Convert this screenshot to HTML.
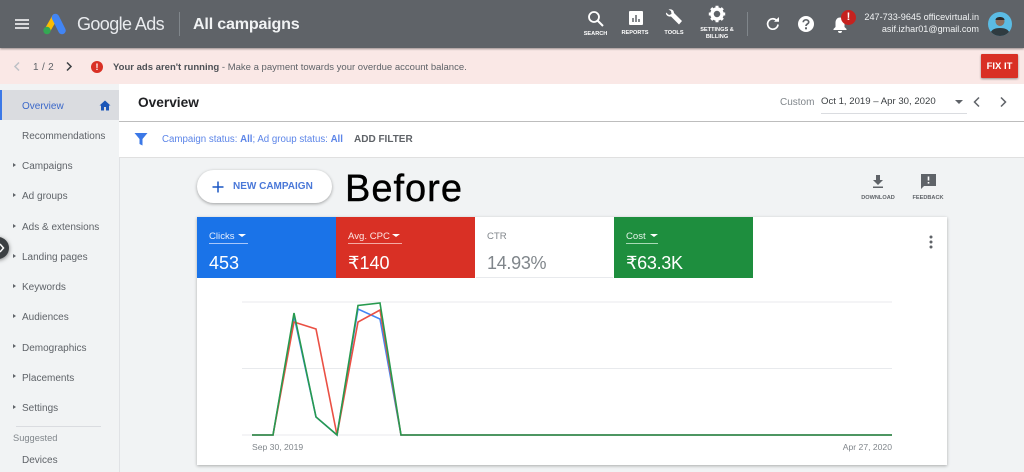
<!DOCTYPE html>
<html><head><meta charset="utf-8"><style>
html,body{margin:0;padding:0}
body{width:1024px;height:472px;position:relative;overflow:hidden;background:#f1f3f4;font-family:"Liberation Sans",sans-serif;color:#5f6368}
.a{position:absolute;white-space:nowrap}
.nav{position:absolute;left:22px;font-size:10px;color:#5f6368;line-height:14px;white-space:nowrap}
.tri{position:absolute;left:13px;width:0;height:0;border-left:3px solid #5f6368;border-top:2.5px solid transparent;border-bottom:2.5px solid transparent}
.ic{position:absolute;font-size:5.6px;font-weight:bold;color:#fff;text-align:center;line-height:7px;white-space:nowrap}
.tl{position:absolute;font-size:9.6px;line-height:14px;white-space:nowrap}
.tv{position:absolute;font-size:18px;line-height:22px;white-space:nowrap}
</style></head><body>
<!-- header -->
<div class="a" style="left:0;top:0;width:1024px;height:48px;background:#5f6368;box-shadow:0 1px 2px rgba(0,0,0,.4)"></div>
<svg class="a" style="left:14px;top:18px" width="16" height="12"><path d="M1 2h14M1 6h14M1 10h14" stroke="#fff" stroke-width="1.5"/></svg>
<svg class="a" style="left:42px;top:12px" width="26" height="24" viewBox="0 0 26 24"><path d="M5 19L13 5" stroke="#fbbc04" stroke-width="6" stroke-linecap="round"/><path d="M13.500 5.500L20 18.500" stroke="#4285f4" stroke-width="7.500" stroke-linecap="round"/><circle cx="5" cy="18.500" r="3.700" fill="#34a853"/></svg>
<div class="a" style="left:77px;top:13px;font-size:18px;line-height:22px;color:#e8eaed;letter-spacing:-.6px">Google Ads</div>
<div class="a" style="left:179px;top:12px;width:1px;height:24px;background:#80868b"></div>
<div class="a" style="left:193px;top:13px;font-size:16.100px;line-height:22px;font-weight:bold;color:#f1f3f4;letter-spacing:-.2px">All campaigns</div>
<svg class="a" style="left:587px;top:10px" width="18" height="18" viewBox="0 0 18 18"><circle cx="7" cy="7" r="5" fill="none" stroke="#fff" stroke-width="1.800"/><path d="M10.500 10.500L16 16" stroke="#fff" stroke-width="2"/></svg>
<div class="ic" style="left:583px;top:30.500px;width:25px">SEARCH</div>
<svg class="a" style="left:628px;top:10px" width="16" height="16" viewBox="0 0 16 16"><rect x="1" y="1" width="14" height="14" rx="1" fill="#fff"/><path d="M5 8v4M8 5v7M11 9v3" stroke="#5f6368" stroke-width="1.500"/></svg>
<div class="ic" style="left:620px;top:30px;width:30px">REPORTS</div>
<svg class="a" style="left:664px;top:8px" width="20" height="19" viewBox="0 0 20 19"><path d="M2 4.500L5 7l2.500-1-.5-3L4.500 1.500C7 .5 10 2 10 5l8 8-3 3.500-8-8C4 9 1.500 7 2 4.500z" fill="#fff"/></svg>
<div class="ic" style="left:661px;top:30px;width:26px">TOOLS</div>
<svg class="a" style="left:708px;top:5px" width="18" height="18" viewBox="0 0 18 18"><circle cx="9" cy="9" r="5" fill="none" stroke="#fff" stroke-width="3.500"/><path d="M9 .8v3M9 14.200v3M.8 9h3M14.200 9h3M3.200 3.200l2.100 2.100M12.700 12.700l2.100 2.100M3.200 14.800l2.100-2.100M12.700 5.300l2.100-2.100" stroke="#fff" stroke-width="3"/></svg>
<div class="ic" style="left:697px;top:26.500px;width:40px">SETTINGS &amp;<br>BILLING</div>
<div class="a" style="left:747px;top:12px;width:1px;height:24px;background:#80868b"></div>
<svg class="a" style="left:765px;top:16px" width="16" height="16" viewBox="0 0 16 16"><path d="M13 8.500A5.200 5.200 0 1 1 11.500 4.300" fill="none" stroke="#fff" stroke-width="1.700"/><path d="M9 5.800h5V1z" fill="#fff"/></svg>
<svg class="a" style="left:797px;top:15px" width="18" height="18" viewBox="0 0 18 18"><circle cx="9" cy="9" r="8" fill="#fff"/><path d="M6.300 7.200C6.300 4 11.700 4 11.700 7.200 11.700 9 9 9 9 11" fill="none" stroke="#5f6368" stroke-width="1.700"/><rect x="8" y="12.300" width="2" height="2" fill="#5f6368"/></svg>
<svg class="a" style="left:832px;top:16px" width="16" height="17" viewBox="0 0 16 17"><path d="M8 1.500c-3 0-4.500 2.500-4.500 5V11L1.500 13v1h13v-1l-2-2V6.500c0-2.500-1.500-5-4.500-5z" fill="#fff"/><path d="M6 15h4a2 2 0 0 1-4 0z" fill="#fff"/></svg>
<div class="a" style="left:841px;top:10px;width:15px;height:15px;border-radius:50%;background:#c5221f;color:#fff;font-size:11px;font-weight:bold;line-height:15px;text-align:center">!</div>
<div class="a" style="left:844px;top:11px;width:135px;text-align:right;font-size:9.100px;line-height:12px;color:#f1f3f4">247-733-9645 officevirtual.in</div>
<div class="a" style="left:844px;top:22.500px;width:135px;text-align:right;font-size:9.100px;line-height:12px;color:#f1f3f4">asif.izhar01@gmail.com</div>
<svg class="a" style="left:988px;top:12px" width="24" height="24" viewBox="0 0 24 24"><defs><clipPath id="c"><circle cx="12" cy="12" r="12"/></clipPath></defs><g clip-path="url(#c)"><rect width="24" height="24" fill="#5bbce4"/><path d="M2 24c0-6 4-8 10-8s10 2 10 8z" fill="#2f3b40"/><circle cx="12" cy="9.500" r="4.500" fill="#8a6f60"/><path d="M7.500 8c0-4 9-4 9 0z" fill="#2a2a2a"/></g></svg>
<!-- banner -->
<div class="a" style="left:0;top:48px;width:1024px;height:36px;background:#fae8e6;z-index:-1"></div>
<svg class="a" style="left:12px;top:61px" width="10" height="11"><path d="M7 1.500L3 5.500l4 4" fill="none" stroke="#bdc1c6" stroke-width="1.500"/></svg>
<div class="a" style="left:33px;top:60px;font-size:10px;line-height:15px;color:#5f6368;letter-spacing:.3px">1 / 2</div>
<svg class="a" style="left:64px;top:61px" width="10" height="11"><path d="M3 1.500l4 4-4 4" fill="none" stroke="#3c4043" stroke-width="1.500"/></svg>
<div class="a" style="left:91px;top:61px;width:12px;height:12px;border-radius:50%;background:#d93025;color:#fff;font-size:9px;font-weight:bold;line-height:12px;text-align:center">!</div>
<div class="a" style="left:113px;top:59.500px;font-size:9.530px;line-height:15px;color:#5f6368"><b style="color:#4d5156">Your ads aren't running</b> - Make a payment towards your overdue account balance.</div>
<div class="a" style="left:981px;top:54px;width:37px;height:24px;background:#d93025;color:#fff;font-size:9.500px;font-weight:bold;line-height:25px;text-align:center;border-radius:1px;box-shadow:0 1px 2px rgba(0,0,0,.4)">FIX IT</div>
<!-- sidebar -->
<div class="a" style="left:118.500px;top:84px;width:1px;height:388px;background:#e0e2e5"></div>
<div class="a" style="left:0;top:90px;width:119px;height:30px;background:#dadce0"></div>
<div class="a" style="left:0;top:90px;width:2px;height:30px;background:#3b78e7"></div>
<div class="nav" style="top:100px;color:#3b68c9">Overview</div>
<svg class="a" style="left:99px;top:100px" width="12" height="11" viewBox="0 0 12 11"><path d="M6 .5L.5 5.500H2V10.500h3V7h2v3.500h3V5.500h1.500z" fill="#1a56b8"/></svg>
<div class="nav" style="top:130px">Recommendations</div>
<div class="tri" style="top:163px"></div><div class="nav" style="top:160px">Campaigns</div>
<div class="tri" style="top:193px"></div><div class="nav" style="top:190px">Ad groups</div>
<div class="tri" style="top:224px"></div><div class="nav" style="top:221px">Ads &amp; extensions</div>
<div class="tri" style="top:254px"></div><div class="nav" style="top:251px">Landing pages</div>
<div class="tri" style="top:284px"></div><div class="nav" style="top:281px">Keywords</div>
<div class="tri" style="top:314px"></div><div class="nav" style="top:311px">Audiences</div>
<div class="tri" style="top:344px"></div><div class="nav" style="top:342px">Demographics</div>
<div class="tri" style="top:374px"></div><div class="nav" style="top:372px">Placements</div>
<div class="tri" style="top:405px"></div><div class="nav" style="top:402px">Settings</div>
<div class="a" style="left:16px;top:426px;width:85px;height:1px;background:#dadce0"></div>
<div class="nav" style="left:13px;top:431px;font-size:9.300px;color:#80868b">Suggested</div>
<div class="nav" style="top:454px">Devices</div>
<div class="a" style="left:-13px;top:237px;width:22px;height:22px;border-radius:50%;background:#3c4043;box-shadow:0 1px 4px rgba(0,0,0,.5)"></div>
<svg class="a" style="left:0;top:243px" width="8" height="10"><path d="M0 1l3.500 4L0 9" fill="none" stroke="#fff" stroke-width="1.500"/></svg>
<!-- main header -->
<div class="a" style="left:119px;top:84px;width:905px;height:37px;background:#fff;border-bottom:1px solid #bdbdbd"></div>
<div class="a" style="left:138px;top:93px;font-size:13.700px;line-height:20px;font-weight:bold;color:#202124">Overview</div>
<div class="a" style="left:780px;top:96px;font-size:10px;line-height:14px;color:#80868b">Custom</div>
<div class="a" style="left:821px;top:95px;font-size:9.600px;line-height:14px;color:#3c4043">Oct 1, 2019 – Apr 30, 2020</div>
<div class="a" style="left:821px;top:113px;width:146px;height:1px;background:#dadce0"></div>
<div class="a" style="left:955px;top:100px;width:0;height:0;border-top:4px solid #5f6368;border-left:4px solid transparent;border-right:4px solid transparent"></div>
<svg class="a" style="left:972px;top:96px" width="10" height="12"><path d="M7 1.500L2.500 6 7 10.500" fill="none" stroke="#5f6368" stroke-width="1.500"/></svg>
<svg class="a" style="left:998px;top:96px" width="10" height="12"><path d="M3 1.500L7.500 6 3 10.500" fill="none" stroke="#5f6368" stroke-width="1.500"/></svg>
<!-- filter -->
<div class="a" style="left:119px;top:122px;width:905px;height:35px;background:#fff;border-bottom:1px solid #e0e0e0"></div>
<svg class="a" style="left:134px;top:132px" width="14" height="14" viewBox="0 0 14 14"><path d="M.5 1h13L8.500 7v6.500l-3-1.500V7z" fill="#3b78e7"/></svg>
<div class="a" style="left:162px;top:133px;font-size:9.700px;line-height:14px;color:#5c85e8">Campaign status: <b>All</b>; Ad group status: <b>All</b></div>
<div class="a" style="left:354px;top:133px;font-size:10px;line-height:14px;font-weight:bold;color:#5f6368">ADD FILTER</div>
<!-- new campaign -->
<div class="a" style="left:197px;top:170px;width:135px;height:33px;border-radius:17px;background:#fff;box-shadow:0 1px 3px rgba(0,0,0,.35)"></div>
<svg class="a" style="left:212px;top:181px" width="12" height="12"><path d="M6 .5v11M.5 6h11" stroke="#1a56c4" stroke-width="1.500"/></svg>
<div class="a" style="left:233px;top:180px;font-size:10px;line-height:14px;font-weight:bold;color:#4a78d8">NEW CAMPAIGN</div>
<div class="a" style="left:345px;top:167.500px;font-size:38px;line-height:42px;color:#000;letter-spacing:1px;-webkit-text-stroke:.4px #000">Before</div>
<!-- download, feedback -->
<svg class="a" style="left:871px;top:174px" width="14" height="15" viewBox="0 0 14 15"><path d="M5 1h4v5h3L7 11 2 6h3z" fill="#5f6368"/><rect x="2" y="12.500" width="10" height="1.500" fill="#5f6368"/></svg>
<div class="ic" style="left:858px;top:195px;width:40px;color:#5f6368">DOWNLOAD</div>
<svg class="a" style="left:920px;top:173px" width="17" height="17" viewBox="0 0 17 17"><path d="M1 1h15v12H4l-3 3z" fill="#5f6368"/><rect x="7.700" y="3.500" width="1.600" height="4" fill="#fff"/><rect x="7.700" y="9" width="1.600" height="1.600" fill="#fff"/></svg>
<div class="ic" style="left:908px;top:195px;width:40px;color:#5f6368">FEEDBACK</div>
<!-- card -->
<div class="a" style="left:197px;top:217px;width:750px;height:248px;background:#fff;box-shadow:0 1px 3px rgba(0,0,0,.3)"></div>
<div class="a" style="left:197px;top:217px;width:139px;height:61px;background:#1a73e8"></div>
<div class="a" style="left:336px;top:217px;width:139px;height:61px;background:#d93025"></div>
<div class="a" style="left:476px;top:277px;width:137px;height:1px;background:#e8eaed"></div>
<div class="a" style="left:614px;top:217px;width:139px;height:61px;background:#1e8e3e"></div>
<div class="tl" style="left:209px;top:229.500px;color:#e8f0fe">Clicks</div>
<div class="a" style="left:238px;top:234px;border-top:3.500px solid #fff;border-left:4px solid transparent;border-right:4px solid transparent"></div>
<div class="a" style="left:209px;top:243px;width:39px;height:1px;background:#a8c7fa"></div>
<div class="tv" style="left:209px;top:252px;color:#fff">453</div>
<div class="tl" style="left:348px;top:229.500px;color:#fce8e6">Avg. CPC</div>
<div class="a" style="left:392px;top:234px;border-top:3.500px solid #fff;border-left:4px solid transparent;border-right:4px solid transparent"></div>
<div class="a" style="left:348px;top:243px;width:54px;height:1px;background:#f4aaa4"></div>
<div class="tv" style="left:348px;top:252px;color:#fff;font-family:'Liberation Sans','DejaVu Sans',sans-serif">₹140</div>
<div class="tl" style="left:487px;top:229.500px;color:#80868b">CTR</div>
<div class="tv" style="left:487px;top:252px;color:#80868b;letter-spacing:-.3px">14.93%</div>
<div class="tl" style="left:626px;top:229.500px;color:#e6f4ea">Cost</div>
<div class="a" style="left:650px;top:234px;border-top:3.500px solid #fff;border-left:4px solid transparent;border-right:4px solid transparent"></div>
<div class="a" style="left:626px;top:243px;width:32px;height:1px;background:#a8dab5"></div>
<div class="tv" style="left:626px;top:252px;color:#fff;font-family:'Liberation Sans','DejaVu Sans',sans-serif;letter-spacing:-.3px">₹63.3K</div>
<svg class="a" style="left:928px;top:235px" width="6" height="14"><circle cx="3" cy="2" r="1.500" fill="#5f6368"/><circle cx="3" cy="7" r="1.500" fill="#5f6368"/><circle cx="3" cy="12" r="1.500" fill="#5f6368"/></svg>
<!-- chart -->
<svg class="a" style="left:0;top:0" width="1024" height="472">
<path d="M242 302H892M242 368.500H892M242 435H892" stroke="#e8eaed" stroke-width="1"/>
<polyline points="252,435 273,435 294,316 316,417 337,435 358,309 380,319 401,435 892,435" fill="none" stroke="#4285f4" stroke-width="1.600"/>
<polyline points="252,435 273,435 294,322 316,329 337,435 358,322 380,310 401,435 892,435" fill="none" stroke="#ea5044" stroke-width="1.600"/>
<polyline points="252,435 273,435 294,313 316,417 337,435 358,305.500 380,303 401,435 892,435" fill="none" stroke="#279a4e" stroke-width="1.600"/>
</svg>
<div class="a" style="left:252px;top:441px;font-size:8.600px;line-height:13px;color:#80868b">Sep 30, 2019</div>
<div class="a" style="left:792px;width:100px;text-align:right;top:441px;font-size:8.600px;line-height:13px;color:#80868b">Apr 27, 2020</div>
</body></html>
